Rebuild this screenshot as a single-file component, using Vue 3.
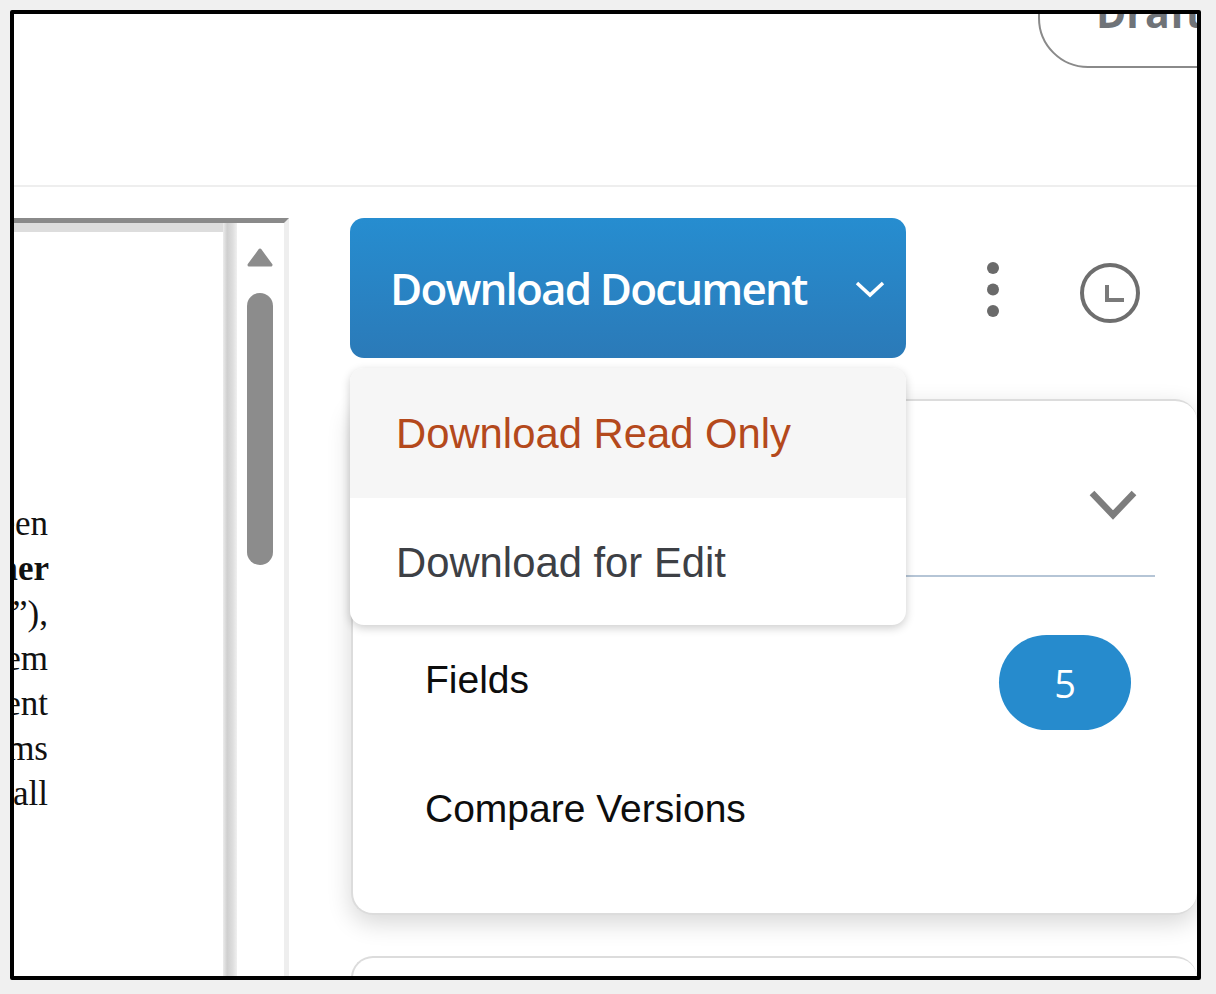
<script setup>
const docLines = [
  { text: 'between', bold: false },
  { text: 'Customer', bold: true },
  { text: '(“Buyer”),', bold: false },
  { text: 'them', bold: false },
  { text: 'agreement', bold: false },
  { text: 'terms', bold: false },
  { text: 'shall', bold: false }
]
</script>

<template>
  <div class="page">
    <div class="frame">
      <header class="topbar">
        <div class="status-pill">Draft</div>
      </header>
      <main class="body">
        <section class="doc">
          <div class="doc-inner">
            <div class="doc-page">
              <div v-for="line in docLines" :key="line.text" class="doc-line" :class="{ bold: line.bold }">
                <span>{{ line.text }}</span>
              </div>
            </div>
            <div class="doc-shadow"></div>
            <div class="scrollbar">
              <svg class="scroll-arrow" width="28" height="22" viewBox="0 0 28 22">
                <path d="M14 3 L25 18 H3 Z" fill="#8c8c8c" stroke="#8c8c8c" stroke-width="3" stroke-linejoin="round" />
              </svg>
              <div class="scroll-thumb"></div>
            </div>
          </div>
        </section>
        <section class="side">
          <div class="toolbar">
            <button class="download-btn">
              <span class="download-label">Download Document</span>
              <svg class="btn-chevron" width="32" height="20" viewBox="0 0 32 20">
                <path d="M3 4 L16 16 L29 4" fill="none" stroke="#fff" stroke-width="3.5" />
              </svg>
            </button>
            <svg class="dots" width="20" height="60" viewBox="0 0 20 60">
              <circle cx="10" cy="8" r="6" fill="#6a6a6a" />
              <circle cx="10" cy="29.5" r="6" fill="#6a6a6a" />
              <circle cx="10" cy="51" r="6" fill="#6a6a6a" />
            </svg>
            <svg class="clock" width="64" height="64" viewBox="0 0 64 64">
              <circle cx="32" cy="32" r="28" fill="none" stroke="#6e6e6e" stroke-width="4" />
              <path d="M29 24 V39 H46" fill="none" stroke="#7a7a7a" stroke-width="4" />
            </svg>
          </div>
          <div class="menu">
            <div class="menu-item active">Download Read Only</div>
            <div class="menu-item">Download for Edit</div>
          </div>
          <div class="card main-card">
            <div class="card-head">
              <svg width="50" height="34" viewBox="0 0 50 34">
                <path d="M4 5 L25 27 L46 5" fill="none" stroke="#7d7d7d" stroke-width="6.5" />
              </svg>
            </div>
            <div class="rows">
              <div class="row">
                <span>Fields</span>
                <span class="badge">5</span>
              </div>
              <div class="row">
                <span>Compare Versions</span>
              </div>
            </div>
          </div>
          <div class="card next-card"></div>
        </section>
      </main>
    </div>
  </div>
</template>

<style>
html, body { margin: 0; background: #f0f0f0; }
</style>

<style scoped>
.page {
  width: 1216px;
  height: 994px;
  padding: 10px 15px 14px 10px;
  box-sizing: border-box;
  background: #f0f0f0;
  font-family: "Liberation Sans", Arial, sans-serif;
}
.frame {
  width: 100%;
  height: 100%;
  box-sizing: border-box;
  border: 4px solid #000;
  border-radius: 2px;
  background: #fff;
  overflow: hidden;
  display: flex;
  flex-direction: column;
}
.topbar {
  height: 173px;
  flex: none;
  box-sizing: border-box;
  border-bottom: 2px solid #eeeeee;
  padding-bottom: 117px;
  display: flex;
  align-items: flex-end;
  justify-content: flex-end;
  overflow: hidden;
}
.status-pill {
  flex: none;
  width: 220px;
  height: 120px;
  margin-right: -61px;
  box-sizing: border-box;
  border: 2px solid #8a8a8a;
  border-radius: 50px;
  padding: 37px 0 0 56px;
  font-family: "Open Sans", sans-serif;
  font-weight: 700;
  font-size: 41px;
  line-height: 50px;
  color: #6f7378;
}
.body {
  flex: 1;
  min-height: 0;
  display: flex;
  padding-top: 31px;
}
.doc {
  width: 275px;
  flex: none;
  box-sizing: border-box;
  border-top: 5px solid #8a8a8a;
  border-right: 5px solid #eeeeee;
  display: flex;
  flex-direction: column;
}
.doc-inner {
  flex: 1;
  display: flex;
  border-top: 9px solid #dddddd;
  min-height: 0;
}
.doc-page {
  width: 36px;
  margin-right: 174px;
  padding-top: 269px;
  overflow: hidden;
  font-family: "Liberation Serif", serif;
  font-size: 35px;
  line-height: 45px;
  color: #111;
}
.doc-line {
  display: flex;
  justify-content: flex-end;
  white-space: nowrap;
  padding-right: 1px;
}
.doc-line span { flex: none; }
.doc-line.bold { font-weight: 700; padding-right: 0; }
.doc-shadow {
  width: 14px;
  flex: none;
  background: linear-gradient(to right, #ececec, #cfcfcf 30%, #dedede 70%, #f0f0f0);
  margin-top: -9px;
}
.scrollbar {
  flex: 1;
  display: flex;
  flex-direction: column;
  align-items: center;
  padding: 24px 10px 0 9px;
  margin-top: -9px;
  background: #fff;
}
.scroll-arrow { flex: none; }
.scroll-thumb {
  flex: none;
  width: 26px;
  height: 272px;
  margin-top: 24px;
  border-radius: 13px;
  background: #8c8c8c;
}
.side {
  position: relative;
  margin-left: 61px;
  flex: 1;
  min-width: 0;
}
.toolbar {
  display: flex;
  align-items: center;
  height: 140px;
}
.download-btn {
  width: 556px;
  height: 140px;
  flex: none;
  box-sizing: border-box;
  border: none;
  border-radius: 14px;
  padding: 0 20px 0 40px;
  background: linear-gradient(to bottom, #268dd0, #2b7ab8);
  color: #fff;
  display: flex;
  align-items: center;
  justify-content: space-between;
}
.download-label {
  font-family: "Open Sans", sans-serif;
  font-weight: 600;
  font-size: 44px;
  letter-spacing: -1.85px;
  white-space: nowrap;
}
.btn-chevron { flex: none; margin-top: 2px; }
.dots { flex: none; margin-left: 77px; margin-top: 4px; }
.clock { flex: none; margin-left: 75px; margin-top: 10px; }
.menu {
  position: absolute;
  z-index: 2;
  top: 150px;
  left: 0;
  width: 556px;
  height: 257px;
  border-radius: 14px;
  background: #fff;
  box-shadow: 0 3px 10px rgba(0, 0, 0, 0.2);
  overflow: hidden;
}
.menu-item {
  height: 127px;
  box-sizing: border-box;
  padding: 2px 0 0 46px;
  display: flex;
  align-items: center;
  font-size: 41.8px;
  color: #3d4045;
}
.menu-item.active {
  height: 130px;
  background: #f6f6f6;
  color: #b4491c;
}
.card {
  margin-left: 1px;
  border: 2px solid #dcdcdc;
  border-right: none;
  border-radius: 22px;
  background: #fff;
  box-sizing: border-box;
  box-shadow: 0 8px 24px rgba(0, 0, 0, 0.16);
}
.main-card {
  margin-top: 41px;
  height: 516px;
  padding: 0 42px 0 72px;
  font-size: 39px;
  color: #0d0d0d;
}
.card-head {
  height: 176px;
  box-sizing: border-box;
  border-bottom: 2px solid #b5c5d6;
  display: flex;
  justify-content: flex-end;
  padding: 87px 17px 0 0;
}
.card-head svg { flex: none; }
.rows { padding-top: 38px; }
.row {
  height: 129px;
  display: flex;
  align-items: center;
  justify-content: space-between;
  padding-right: 24px;
}
.badge {
  width: 132px;
  height: 95px;
  margin-top: 6px;
  border-radius: 48px;
  background: #268bcd;
  color: #fff;
  font-family: "Open Sans", sans-serif;
  font-size: 38px;
  display: flex;
  align-items: center;
  justify-content: center;
}
.next-card {
  margin-top: 41px;
  height: 120px;
  box-shadow: none;
}
</style>
